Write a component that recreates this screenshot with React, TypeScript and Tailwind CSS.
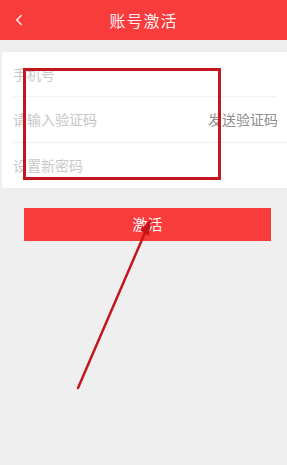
import { ChevronLeft } from 'lucide-react';

const font = { fontFamily: '"Noto Sans CJK SC", "Noto Sans", sans-serif' };

export default function App() {
  return (
    <div className="relative w-[287px] h-[465px] overflow-hidden bg-[#efefef]" style={font}>
      {/* Header */}
      <div className="relative h-10 bg-[#f83b3b] flex items-center justify-center">
        <ChevronLeft className="absolute left-[10px] top-[11px] h-[18px] w-[18px] text-white/90" strokeWidth={2} />
        <span className="text-[16px] text-white/95 tracking-[1px]">账号激活</span>
      </div>

      {/* Form */}
      <div className="mt-[12px] ml-[2px] bg-white">
        <div className="h-[45px] mx-[11px] flex items-center border-b border-[#f2f2f2]">
          <span className="text-[14px] text-[#c9c9c9]">手机号</span>
        </div>
        <div className="h-[46px] ml-[11px] pr-[9px] flex items-center justify-between border-b border-[#efefef]">
          <span className="text-[14px] text-[#c6c6c6]">请输入验证码</span>
          <span className="text-[14px] text-[#8e8e8e]">发送验证码</span>
        </div>
        <div className="h-[45px] mx-[11px] flex items-center">
          <span className="text-[14px] text-[#c9c9c9]">设置新密码</span>
        </div>
      </div>

      {/* Button */}
      <div className="px-6 mt-[20px]">
        <button className="w-[247px] h-[33px] bg-[#f83c3c] text-white text-[15px] flex items-center justify-center">
          激活
        </button>
      </div>

      {/* Annotation: red box */}
      <div className="absolute left-[23px] top-[68px] w-[198px] h-[112px] border-[3px] border-[#c4161c]" />

      {/* Annotation: arrow */}
      <svg className="absolute left-0 top-0" width="287" height="465" viewBox="0 0 287 465">
        <line x1="78" y1="388" x2="147" y2="228" stroke="#c4161c" strokeWidth="2.5" strokeLinecap="round" />
        <polygon points="151,219 149,236 140,230" fill="#c4161c" />
      </svg>
    </div>
  );
}
